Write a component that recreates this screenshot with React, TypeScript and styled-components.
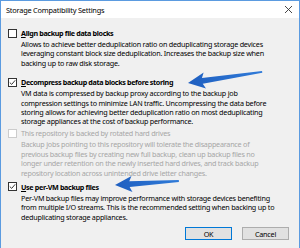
import React from "react";
import styled, { createGlobalStyle } from "styled-components";

const Global = createGlobalStyle`
  html, body { margin: 0; padding: 0; background: #ffffff; }
  body { width: 300px; height: 248px; overflow: hidden; }
`;

const Window = styled.div`
  position: relative;
  box-sizing: border-box;
  width: 300px;
  height: 248px;
  border: 1px solid #5b9be0;
  border-bottom: none;
  background: #f0f0f0;
  display: flex;
  flex-direction: column;
  font-family: "Noto Sans", "Open Sans", sans-serif;
  font-size: 7.2px;
  letter-spacing: -0.22px;
  color: #000;
`;

const TitleBar = styled.div`
  height: 17px;
  background: #ffffff;
  display: flex;
  align-items: center;
  justify-content: space-between;
  padding: 0 6px 0 5px;
  flex-shrink: 0;
`;

const Title = styled.span`
  font-size: 7.4px;
  color: #000;
  line-height: 10px;
`;

const CloseIcon = styled.svg`
  width: 9px;
  height: 9px;
  display: block;
`;

const Body = styled.div`
  display: flex;
  flex-direction: column;
  padding: 10px 8px 0 7px;
`;

const Option = styled.div<{ $mt: number }>`
  display: flex;
  flex-direction: column;
  margin-top: ${(p) => p.$mt}px;
`;

const Row = styled.div`
  display: flex;
  align-items: center;
  height: 10px;
  gap: 4px;
`;

const Box = styled.div<{ $disabled?: boolean }>`
  box-sizing: border-box;
  width: 9px;
  height: 9px;
  background: #fff;
  border: 1px solid ${(p) => (p.$disabled ? "#cccccc" : "#333333")};
  display: flex;
  align-items: center;
  justify-content: center;
`;

const Label = styled.span<{ $disabled?: boolean }>`
  font-weight: ${(p) => (p.$disabled ? 400 : 700)};
  letter-spacing: ${(p) => (p.$disabled ? "-0.22px" : "-0.36px")};
  color: ${(p) => (p.$disabled ? "#a6a6a6" : "#000")};
  line-height: 10px;
  white-space: nowrap;
`;

const Key = styled.span`
  text-decoration: underline;
  text-underline-offset: 1px;
`;

const Desc = styled.div<{ $disabled?: boolean }>`
  margin: 2px 0 0 13px;
  line-height: 9.4px;
  color: ${(p) => (p.$disabled ? "#a6a6a6" : "#000")};
`;

const Line = styled.div`
  white-space: nowrap;
`;

const Buttons = styled.div`
  display: flex;
  justify-content: flex-end;
  gap: 10px;
  margin-top: 5px;
  padding-right: 2px;
`;

const Button = styled.div<{ $primary?: boolean }>`
  box-sizing: border-box;
  width: 47px;
  height: 13px;
  background: #e1e1e1;
  border: 1px solid ${(p) => (p.$primary ? "#0078d7" : "#adadad")};
  display: flex;
  align-items: center;
  justify-content: center;
  line-height: 10px;
`;

const Overlay = styled.svg`
  position: absolute;
  left: -1px;
  top: -1px;
  width: 300px;
  height: 248px;
  pointer-events: none;
`;

const Check = () => (
  <svg width="7" height="7" viewBox="0 0 7 7">
    <path d="M0.8 3.6 L2.7 5.4 L6.2 1.3" fill="none" stroke="#222" strokeWidth="0.9" />
  </svg>
);

const Arrow = ({ x, y, len, angle }: { x: number; y: number; len: number; angle: number }) => (
  <g transform={`translate(${x} ${y}) rotate(${angle})`}>
    <polygon
      points={`0,0 17,-8 14.5,-2.8 ${len},-0.9 ${len},0.9 14.5,2.8 17,8`}
      fill="url(#ag)"
    />
  </g>
);

type Opt = {
  key: string;
  rest: string;
  lines: string[];
  checked: boolean;
  disabled?: boolean;
  mt: number;
};

const options: Opt[] = [
  {
    key: "A",
    rest: "lign backup file data blocks",
    lines: [
      "Allows to achieve better deduplication ratio on deduplicating storage devices",
      "leveraging constant block size deduplication. Increases the backup size when",
      "backing up to raw disk storage.",
    ],
    checked: false,
    mt: 0,
  },
  {
    key: "D",
    rest: "ecompress backup data blocks before storing",
    lines: [
      "VM data is compressed by backup proxy according to the backup job",
      "compression settings to minimize LAN traffic. Uncompressing the data before",
      "storing allows for achieving better deduplication ratio on most deduplicating",
      "storage appliances at the cost of backup performance.",
    ],
    checked: true,
    mt: 9,
  },
  {
    key: "",
    rest: "This repository is backed by rotated hard drives",
    lines: [
      "Backup jobs pointing to this repository will tolerate the disappearance of",
      "previous backup files by creating new full backup, clean up backup files no",
      "longer under retention on the newly inserted hard drives, and track backup",
      "repository location across unintended drive letter changes.",
    ],
    checked: false,
    disabled: true,
    mt: 1.5,
  },
  {
    key: "U",
    rest: "se per-VM backup files",
    lines: [
      "Per-VM backup files may improve performance with storage devices benefiting",
      "from multiple I/O streams. This is the recommended setting when backing up to",
      "deduplicating storage appliances.",
    ],
    checked: true,
    mt: 4,
  },
];

export default function App() {
  return (
    <>
      <Global />
      <Window>
        <TitleBar>
          <Title>Storage Compatibility Settings</Title>
          <CloseIcon viewBox="0 0 9 9">
            <path d="M1 1 L8 8 M8 1 L1 8" stroke="#333" strokeWidth="0.9" />
          </CloseIcon>
        </TitleBar>
        <Body>
          {options.map((o, i) => (
            <Option key={i} $mt={o.mt}>
              <Row>
                <Box $disabled={o.disabled}>{o.checked && <Check />}</Box>
                <Label $disabled={o.disabled}>
                  {o.key && <Key>{o.key}</Key>}
                  {o.rest}
                </Label>
              </Row>
              <Desc $disabled={o.disabled}>
                {o.lines.map((l, j) => (
                  <Line key={j}>{l}</Line>
                ))}
              </Desc>
            </Option>
          ))}
          <Buttons>
            <Button $primary>OK</Button>
            <Button>Cancel</Button>
          </Buttons>
        </Body>
        <Overlay viewBox="0 0 300 248">
          <defs>
            <linearGradient id="ag" x1="0" y1="0" x2="1" y2="0">
              <stop offset="0" stopColor="#1f5fc0" />
              <stop offset="1" stopColor="#2f7ad8" />
            </linearGradient>
          </defs>
          <Arrow x={188} y={83} len={75} angle={-8.5} />
          <Arrow x={115} y={185} len={64} angle={-3.6} />
        </Overlay>
      </Window>
    </>
  );
}
